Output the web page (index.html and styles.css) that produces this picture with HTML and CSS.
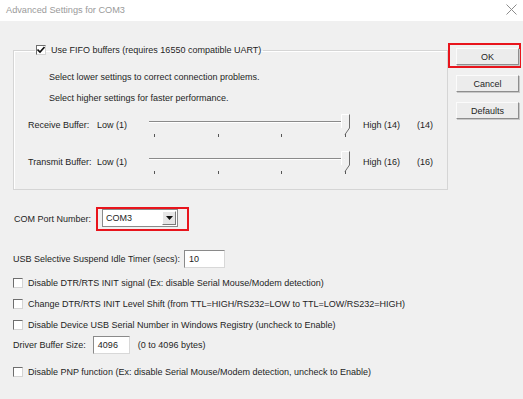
FILE: index.html
```html
<!DOCTYPE html>
<html lang="en">
<head>
  <meta charset="UTF-8" />
  <title>Advanced Settings for COM3</title>
  <link rel="stylesheet" href="styles.css">
</head>
<body>
  <div class="titlebar">
    <span class="title">Advanced Settings for COM3</span>
    <svg class="close" width="11" height="11" viewBox="0 0 11 11">
      <path d="M0.5 0.5 L10.5 10.5 M10.5 0.5 L0.5 10.5" stroke="#8c8c8c" stroke-width="1" fill="none" />
    </svg>
  </div>

  <div class="dialog">
    <div class="main">
      <fieldset class="fifo">
        <legend>
          <span class="check"><span class="box"><svg width="8" height="8" viewBox="0 0 8 8"><path d="M0.5 3.5 L3 6 L7.5 1" stroke="#111" stroke-width="1.6" fill="none" /></svg></span>Use FIFO buffers (requires 16550 compatible UART)</span>
        </legend>
        <p class="hint">Select lower settings to correct connection problems.</p>
        <p class="hint second">Select higher settings for faster performance.</p>

        <div class="buffer-row">
          <span>Receive Buffer:</span>
          <span>Low (1)</span>
          <div class="slider">
            <div class="track"></div>
            <div class="ticks"><i></i><i></i><i></i><i></i></div>
            <svg class="thumb" width="10" height="22" viewBox="0 0 10 22">
              <path d="M0.5 14 V0.5 H8" stroke="#ffffff" fill="#f0f0f0" />
              <path d="M8.5 0.5 V14 L4 20.5" stroke="#6d6d6d" fill="none" />
            </svg>
          </div>
          <span>High (14)</span>
          <span>(14)</span>
        </div>

        <div class="buffer-row transmit">
          <span>Transmit Buffer:</span>
          <span>Low (1)</span>
          <div class="slider">
            <div class="track"></div>
            <div class="ticks"><i></i><i></i><i></i><i></i></div>
            <svg class="thumb" width="10" height="22" viewBox="0 0 10 22">
              <path d="M0.5 14 V0.5 H8" stroke="#ffffff" fill="#f0f0f0" />
              <path d="M8.5 0.5 V14 L4 20.5" stroke="#6d6d6d" fill="none" />
            </svg>
          </div>
          <span>High (16)</span>
          <span>(16)</span>
        </div>
      </fieldset>

      <div class="com-row">
        <span class="com-label">COM Port Number:</span>
        <div class="marked">
          <div class="combo">
            <span>COM3</span>
            <span class="drop"><svg width="7" height="4" viewBox="0 0 7 4"><path d="M0 0 H7 L3.5 4 Z" fill="#111" /></svg></span>
          </div>
        </div>
      </div>

      <div class="usb-row">
        <span>USB Selective Suspend Idle Timer (secs):</span>
        <span class="textbox timer">10</span>
      </div>

      <div class="option"><span class="box"></span>Disable DTR/RTS INIT signal (Ex: disable Serial Mouse/Modem detection)</div>
      <div class="option"><span class="box"></span>Change DTR/RTS INIT Level Shift (from TTL=HIGH/RS232=LOW to TTL=LOW/RS232=HIGH)</div>
      <div class="option"><span class="box"></span>Disable Device USB Serial Number in Windows Registry (uncheck to Enable)</div>

      <div class="driver-row">
        <span>Driver Buffer Size:</span>
        <span class="textbox size">4096</span>
        <span class="range">(0 to 4096 bytes)</span>
      </div>

      <div class="option pnp"><span class="box"></span>Disable PNP function (Ex: disable Serial Mouse/Modem detection, uncheck to Enable)</div>
    </div>

    <div class="buttons">
      <div class="marked ok-mark"><button>OK</button></div>
      <button class="cancel">Cancel</button>
      <button class="defaults">Defaults</button>
    </div>
  </div>
</body>
</html>
```

FILE: styles.css
```css
body {
  margin: 0;
  background: #f0f0f0;
  font-family: "Liberation Sans", Arial, sans-serif;
  font-size: 9px;
  color: #1e1e1e;
  white-space: nowrap;
}

.titlebar {
  height: 21px;
  background: #ffffff;
  display: flex;
  align-items: center;
  justify-content: space-between;
  padding: 0 6px;
}

.title {
  font-size: 9.2px;
  color: #9a9a9a;
  margin-top: -2px;
}

.close {
  margin-top: -3px;
}

.dialog {
  display: flex;
}

.main {
  padding-left: 13px;
  width: 433px;
}

.fifo {
  box-sizing: border-box;
  width: 433px;
  margin: 22px 0 0;
  padding: 0 14px 15px;
  border: 1px solid #d5d5d5;
  box-shadow: inset 1px 1px 0 #ffffff;
}

.fifo legend {
  margin-left: 7px;
  padding: 0 2px 0 1px;
  line-height: 14px;
}

.check {
  display: flex;
  align-items: center;
}

.box {
  box-sizing: border-box;
  width: 10px;
  height: 10px;
  background: #ffffff;
  border: 1px solid;
  border-color: #6e6e6e #d4d4d4 #d4d4d4 #6e6e6e;
  display: inline-flex;
  align-items: center;
  justify-content: center;
  margin-right: 5px;
  flex-shrink: 0;
}

.hint {
  margin: 13px 0 0 21px;
  line-height: 14px;
}

.hint.second {
  margin-top: 7px;
}

.buffer-row {
  display: grid;
  grid-template-columns: 69px 52px 214px 54px auto;
  align-items: center;
  height: 24px;
  margin-top: 8px;
}

.buffer-row.transmit {
  margin-top: 13px;
}

.slider {
  position: relative;
  width: 202px;
  height: 24px;
}

.track {
  margin-top: 8px;
  width: 196px;
  height: 1px;
  background: #8a8a8a;
  border-bottom: 1px solid #ffffff;
}

.ticks i {
  position: absolute;
  top: 21px;
  width: 1px;
  height: 3px;
  background: #555555;
}

.ticks i:nth-child(1) { left: 5px; }
.ticks i:nth-child(2) { left: 69px; }
.ticks i:nth-child(3) { left: 132px; }
.ticks i:nth-child(4) { left: 196px; }

.thumb {
  position: absolute;
  left: 192px;
  top: 1px;
}

.com-row {
  display: flex;
  align-items: center;
  margin-top: 17px;
}

.com-label {
  width: 82px;
  padding-left: 1px;
}

.marked {
  border: 2px solid #e8141c;
}

.com-row .marked {
  padding: 0 9px 2px 4px;
}

.combo {
  box-sizing: border-box;
  width: 76px;
  height: 18px;
  background: #ffffff;
  border: 1px solid #8a8a8a;
  display: flex;
  align-items: center;
  justify-content: space-between;
  padding-left: 3px;
}

.drop {
  box-sizing: border-box;
  width: 14px;
  height: 14px;
  margin-right: 1px;
  background: #e6e6e6;
  border: 1px solid;
  border-color: #ffffff #7a7a7a #7a7a7a #ffffff;
  display: flex;
  align-items: center;
  justify-content: center;
}

.textbox {
  box-sizing: border-box;
  height: 18px;
  background: #ffffff;
  border: 1px solid;
  border-color: #8a8a8a #d8d8d8 #d8d8d8 #8a8a8a;
  display: flex;
  align-items: center;
  padding-left: 4px;
}

.usb-row {
  display: flex;
  align-items: center;
  margin-top: 19px;
}

.timer {
  width: 41px;
  margin-left: auto;
  margin-right: 221px;
}

.option {
  display: flex;
  align-items: center;
  line-height: 14px;
  margin-top: 7px;
}

.usb-row + .option {
  margin-top: 8px;
}

.driver-row {
  display: flex;
  align-items: center;
  margin-top: 4px;
}

.size {
  width: 37px;
  margin-left: 7px;
}

.range {
  margin-left: 8px;
}

.option.pnp {
  margin-top: 11px;
}

.buttons {
  display: flex;
  flex-direction: column;
  align-items: flex-end;
  width: 73px;
  margin: 22px 0 0 2px;
}

.ok-mark {
  box-sizing: border-box;
  width: 73px;
  padding: 3px 0 1px 6px;
  display: flex;
  justify-content: flex-end;
}

button {
  box-sizing: border-box;
  width: 63px;
  height: 17px;
  padding: 0;
  font-family: inherit;
  font-size: 9px;
  color: #1e1e1e;
  background: #ececec;
  border: 1px solid;
  border-color: #fbfbfb #8e8e8e #8e8e8e #fbfbfb;
  box-shadow: 1px 1px 0 #c8c8c8;
}

.cancel {
  margin: 7px 2px 0 0;
}

.defaults {
  margin: 10px 2px 0 0;
}
```
